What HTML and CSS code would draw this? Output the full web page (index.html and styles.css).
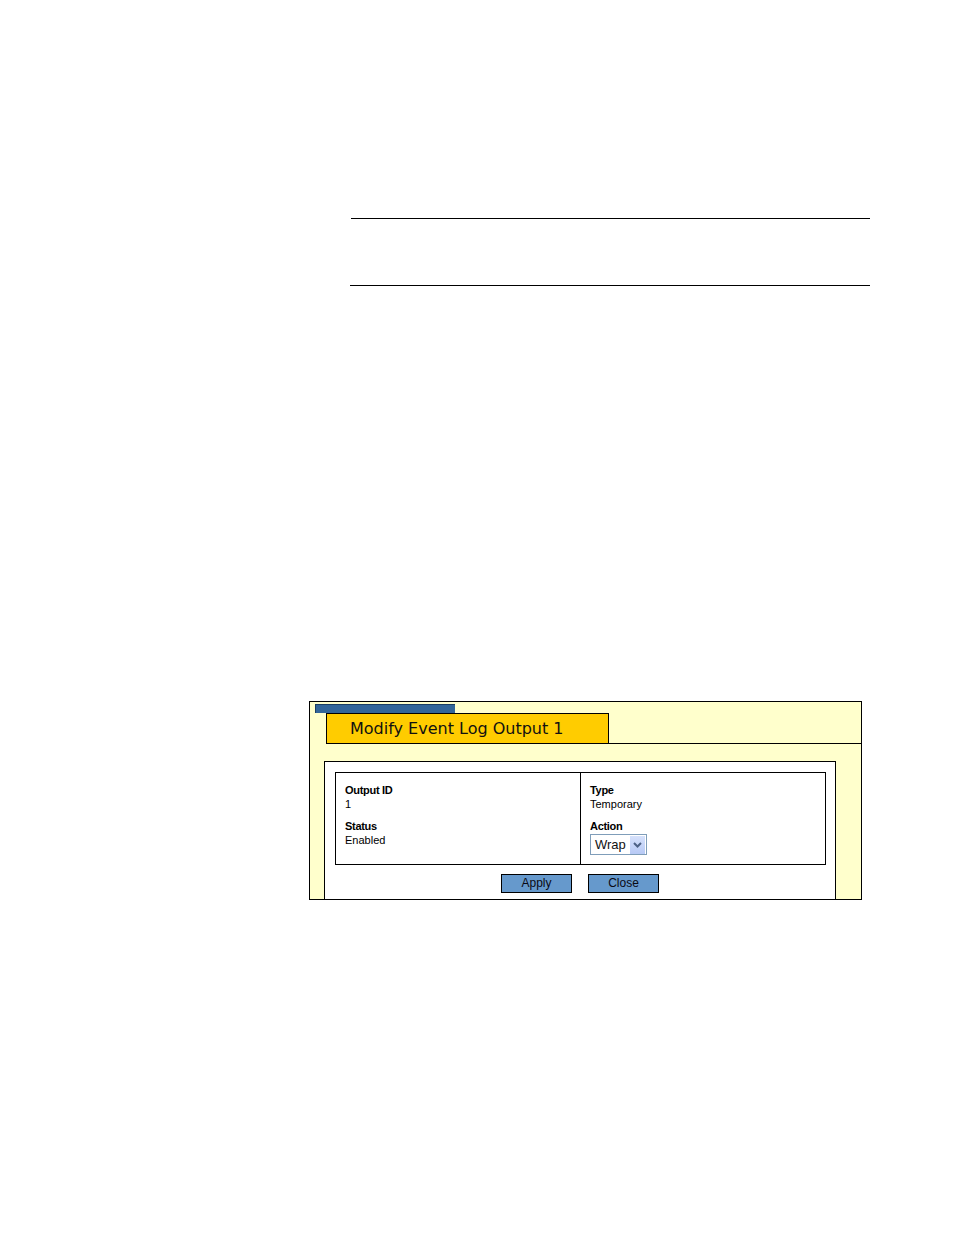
FILE: index.html
```html
<!DOCTYPE html>
<html>
<head>
<meta charset="utf-8">
<link rel="stylesheet" href="styles.css">
</head>
<body>
<div class="page">
  <div class="rule rule-top"></div>
  <div class="rule rule-bottom"></div>

  <div class="panel">
    <div class="panel-bar"></div>
    <div class="panel-head">
      <div class="tab">Modify Event Log Output 1</div>
      <div class="tab-line"></div>
    </div>
    <div class="sheet">
      <div class="grid">
        <div class="cell">
          <div class="label">Output ID</div>
          <div class="value">1</div>
          <div class="label label-2">Status</div>
          <div class="value">Enabled</div>
        </div>
        <div class="cell cell-right">
          <div class="label">Type</div>
          <div class="value">Temporary</div>
          <div class="label label-2">Action</div>
          <div class="select">
            <span class="select-text">Wrap</span>
            <span class="select-btn">
              <svg width="15" height="18" viewBox="0 0 15 18">
                <path d="M4 7 L7.5 10.5 L11 7" fill="none" stroke="#4d6185" stroke-width="2"/>
              </svg>
            </span>
          </div>
        </div>
      </div>
      <div class="buttons">
        <div class="btn">Apply</div>
        <div class="btn">Close</div>
      </div>
    </div>
  </div>
</div>
</body>
</html>
```
FILE: styles.css
```css
html, body {
  margin: 0;
  padding: 0;
  background: #ffffff;
}

.page {
  padding-top: 218px;
  font-family: "Liberation Sans", Arial, sans-serif;
  color: #000;
}

.rule {
  height: 0;
  border-top: 1px solid #000;
}

.rule-top {
  margin-left: 351px;
  width: 519px;
}

.rule-bottom {
  margin-top: 66px;
  margin-left: 350px;
  width: 520px;
}

.panel {
  margin-top: 415px;
  margin-left: 309px;
  width: 553px;
  height: 199px;
  box-sizing: border-box;
  border: 1px solid #000;
  background: #ffffcc;
  display: flex;
  flex-direction: column;
}

.panel-bar {
  margin-top: 2px;
  margin-left: 5px;
  width: 140px;
  height: 9px;
  background: #336699;
  box-sizing: border-box;
  border-top: 1px solid #1c3f63;
  border-left: 1px solid #1c3f63;
}

.panel-head {
  display: flex;
  margin-left: 16px;
}

.tab {
  width: 283px;
  height: 31px;
  box-sizing: border-box;
  border: 1px solid #000;
  background: #ffcc00;
  font-family: "DejaVu Sans", Verdana, sans-serif;
  font-size: 16px;
  line-height: 29px;
  padding-left: 23px;
  color: #111;
  white-space: nowrap;
}

.tab-line {
  flex: 1;
  border-bottom: 1px solid #000;
}

.sheet {
  margin-top: 17px;
  margin-left: 14px;
  width: 512px;
  flex: 1;
  box-sizing: border-box;
  border: 1px solid #000;
  border-bottom: 0;
  background: #ffffff;
  padding: 10px 0 0 10px;
}

.grid {
  width: 491px;
  height: 93px;
  box-sizing: border-box;
  border: 1px solid #000;
  display: grid;
  grid-template-columns: 244px 245px;
}

.cell {
  padding: 10px 0 0 9px;
}

.cell-right {
  border-left: 1px solid #000;
}

.label {
  font-size: 11px;
  font-weight: bold;
  line-height: 14px;
  letter-spacing: -0.3px;
}

.label-2 {
  margin-top: 8px;
}

.value {
  font-size: 11px;
  line-height: 14px;
}

.select {
  margin-top: 1px;
  width: 57px;
  height: 21px;
  box-sizing: border-box;
  border: 1px solid #7f9db9;
  background: #fff;
  display: flex;
  align-items: flex-start;
  justify-content: space-between;
  padding: 1px 1px 0 4px;
}

.select-text {
  font-size: 13px;
  line-height: 18px;
  color: #111;
}

.select-btn {
  width: 15px;
  height: 18px;
  background: linear-gradient(#d6e1fb, #b7c9f5);
  display: block;
}

.select-btn svg {
  display: block;
}

.buttons {
  margin-top: 9px;
  margin-left: -10px;
  display: flex;
  justify-content: center;
  gap: 16px;
}

.btn {
  width: 71px;
  height: 19px;
  box-sizing: border-box;
  border: 1px solid #000;
  background: #6699cc;
  font-size: 12px;
  line-height: 17px;
  text-align: center;
  color: #0a0a14;
}
```
